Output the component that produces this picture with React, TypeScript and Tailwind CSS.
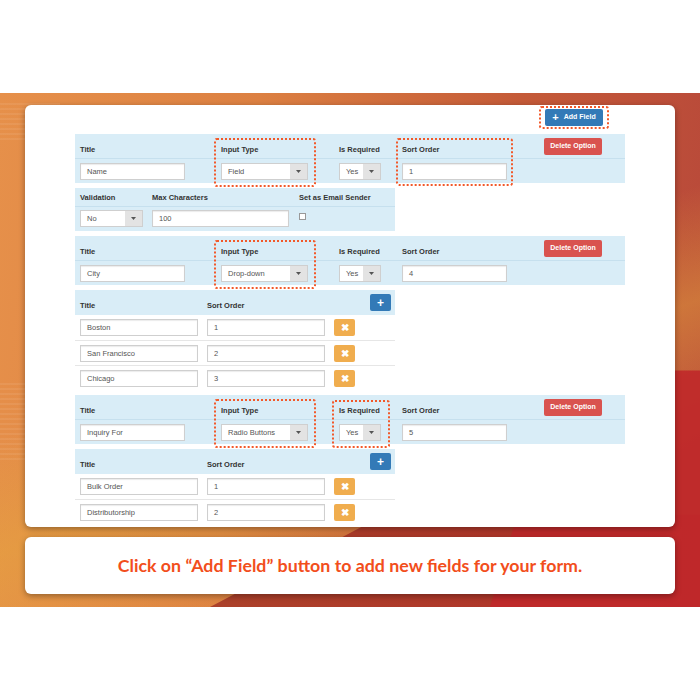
import React from 'react';

const label = "text-[7.5px] font-bold text-[#333] leading-[8px] whitespace-nowrap";
const txt = "text-[7.5px] text-[#555] leading-[9px] whitespace-nowrap";

const Input: React.FC<{ value: string; w: string }> = ({ value, w }) => (
  <div className={`${w} h-[17px] bg-white border border-[#cfcfcf] shadow-[inset_0_1px_1px_rgba(0,0,0,0.08)] flex items-center pl-[6px] ${txt}`}>
    {value}
  </div>
);

const Select: React.FC<{ value: string; w: string }> = ({ value, w }) => (
  <div className={`${w} h-[17px] bg-white border border-[#cfcfcf] flex items-stretch`}>
    <div className={`flex-1 flex items-center pl-[6px] ${txt}`}>{value}</div>
    <div className="w-[17px] bg-[#e3e3e3] flex items-center justify-center">
      <svg width="5" height="3" viewBox="0 0 5 3"><path d="M0 0h5L2.5 3z" fill="#555" /></svg>
    </div>
  </div>
);

const Dotted: React.FC<{ cls: string }> = ({ cls }) => (
  <div className={`absolute border-2 border-dotted border-[#f2592a] rounded-[3px] pointer-events-none ${cls}`} />
);

const DeleteBtn = () => (
  <div className="w-[58px] h-[17px] bg-[#d9534f] rounded-[2px] text-white text-[7px] font-bold flex items-center justify-center">
    Delete Option
  </div>
);

interface FieldProps {
  title: string;
  type: string;
  order: string;
  highlightType?: boolean;
  highlightReq?: boolean;
  highlightOrder?: boolean;
}

const FieldTable: React.FC<FieldProps> = ({ title, type, order, highlightType, highlightReq, highlightOrder }) => (
  <div className="relative w-[550px] bg-[#d9edf7]">
    <div className="h-[24px] flex">
      <div className={`w-[141px] pl-[5px] pt-[12px] ${label}`}>Title</div>
      <div className={`w-[118px] pl-[5px] pt-[12px] ${label}`}>Input Type</div>
      <div className={`w-[63px] pl-[5px] pt-[12px] ${label}`}>Is Required</div>
      <div className={`w-[142px] pl-[5px] pt-[12px] ${label}`}>Sort Order</div>
      <div className="pl-[5px] pt-[4px]"><DeleteBtn /></div>
    </div>
    <div className="h-[25px] border-t border-[#c6e0ee] flex pt-[4px]">
      <div className="w-[141px] pl-[5px]"><Input value={title} w="w-[105px]" /></div>
      <div className="w-[118px] pl-[5px]"><Select value={type} w="w-[87px]" /></div>
      <div className="w-[63px] pl-[5px]"><Select value="Yes" w="w-[42px]" /></div>
      <div className="w-[142px] pl-[5px]"><Input value={order} w="w-[105px]" /></div>
    </div>
    {highlightType && <Dotted cls="left-[139px] top-[4px] w-[102px] h-[49px]" />}
    {highlightReq && <Dotted cls="left-[257px] top-[5px] w-[58px] h-[48px]" />}
    {highlightOrder && <Dotted cls="left-[321px] top-[4px] w-[117px] h-[48px]" />}
  </div>
);

const OptionsTable: React.FC<{ rows: string[][] }> = ({ rows }) => (
  <div className="w-[320px]">
    <div className="h-[25px] bg-[#d9edf7] flex">
      <div className={`w-[127px] pl-[5px] pt-[12px] ${label}`}>Title</div>
      <div className={`w-[168px] pl-[5px] pt-[12px] ${label}`}>Sort Order</div>
      <div className="pt-[4px]">
        <div className="w-[21px] h-[17px] bg-[#337ab7] rounded-[2px] text-white font-bold text-[12px] leading-none flex items-center justify-center">+</div>
      </div>
    </div>
    {rows.map((r, i) => (
      <div key={r[0]} className={`h-[25px] flex pt-[4px] ${i > 0 ? 'border-t border-[#e6e6e6]' : ''}`}>
        <div className="w-[127px] pl-[5px]"><Input value={r[0]} w="w-[118px]" /></div>
        <div className="w-[127px] pl-[5px]"><Input value={r[1]} w="w-[118px]" /></div>
        <div className="pl-[5px]">
          <div className="w-[21px] h-[17px] bg-[#f0ad4e] rounded-[2px] text-white text-[9.5px] font-bold leading-none flex items-center justify-center">✖</div>
        </div>
      </div>
    ))}
  </div>
);

export default function App() {
  return (
    <div className="w-[700px] h-[700px] bg-white pt-[93px] font-['Liberation_Sans',Arial,sans-serif]">
      <div className="relative h-[514px] overflow-hidden bg-[linear-gradient(95deg,#e6904a_0%,#dc8042_35%,#c45a38_70%,#b8483a_100%)] px-[25px] pt-[12px]">
        {/* background decoration */}
        <div className="absolute inset-0 bg-[linear-gradient(160deg,transparent_45%,rgba(230,170,60,0.45)_60%,transparent_80%)]" />
        <div className="absolute inset-0 bg-[linear-gradient(90deg,#a8482a,#b2302a)] [clip-path:polygon(30%_100%,55%_82%,100%_82%,100%_100%)]" />
        <div className="absolute inset-0 bg-[#c0282a] [clip-path:polygon(80%_54%,100%_54%,100%_100%,70%_100%)] opacity-90" />
        <div className="absolute left-0 top-[10px] w-[60px] h-[40px] bg-[repeating-linear-gradient(to_bottom,rgba(255,255,255,0.07)_0px,rgba(255,255,255,0.07)_2px,transparent_2px,transparent_5px)]" />
        <div className="absolute left-0 top-[290px] w-[70px] h-[80px] bg-[repeating-linear-gradient(to_bottom,rgba(255,255,255,0.07)_0px,rgba(255,255,255,0.07)_2px,transparent_2px,transparent_5px)]" />

        <div className="relative h-[422px] bg-white rounded-[6px] shadow-[0_2px_6px_rgba(0,0,0,0.35)] px-[50px] pt-[1px]">
          <div className="flex justify-end pr-[16px]">
            <div className="border-2 border-dotted border-[#f2592a] rounded-[3px] px-[4px] py-[1px]">
              <div className="w-[58px] h-[17px] bg-[#337ab7] rounded-[2px] text-white text-[7px] font-bold flex items-center justify-center gap-[5px]">
                <span className="text-[11px] leading-none">+</span>
                <span>Add Field</span>
              </div>
            </div>
          </div>

          <div className="mt-[5px] flex flex-col gap-[5px]">
            <FieldTable title="Name" type="Field" order="1" highlightType highlightOrder />

            <div className="w-[320px] bg-[#d9edf7]">
              <div className="h-[18px] flex">
                <div className={`w-[72px] pl-[5px] pt-[6px] ${label}`}>Validation</div>
                <div className={`w-[147px] pl-[5px] pt-[6px] ${label}`}>Max Characters</div>
                <div className={`pl-[5px] pt-[6px] ${label}`}>Set as Email Sender</div>
              </div>
              <div className="h-[25px] border-t border-[#c6e0ee] flex pt-[3px]">
                <div className="w-[72px] pl-[5px]"><Select value="No" w="w-[63px]" /></div>
                <div className="w-[147px] pl-[5px]"><Input value="100" w="w-[137px]" /></div>
                <div className="pl-[5px] pt-[3px]">
                  <div className="w-[7px] h-[7px] bg-white border border-[#999]" />
                </div>
              </div>
            </div>

            <FieldTable title="City" type="Drop-down" order="4" highlightType />

            <OptionsTable rows={[['Boston', '1'], ['San Francisco', '2'], ['Chicago', '3']]} />

            <FieldTable title="Inquiry For" type="Radio Buttons" order="5" highlightType highlightReq />

            <OptionsTable rows={[['Bulk Order', '1'], ['Distributorship', '2']]} />
          </div>
        </div>

        <div className="relative mt-[10px] h-[57px] bg-white rounded-[6px] shadow-[0_2px_6px_rgba(0,0,0,0.35)] flex items-center justify-center">
          <span className="font-['Lato',sans-serif] font-bold text-[17.8px] text-[#f24e1c]">
            Click on “Add Field” button to add new fields for your form.
          </span>
        </div>
      </div>
    </div>
  );
}
